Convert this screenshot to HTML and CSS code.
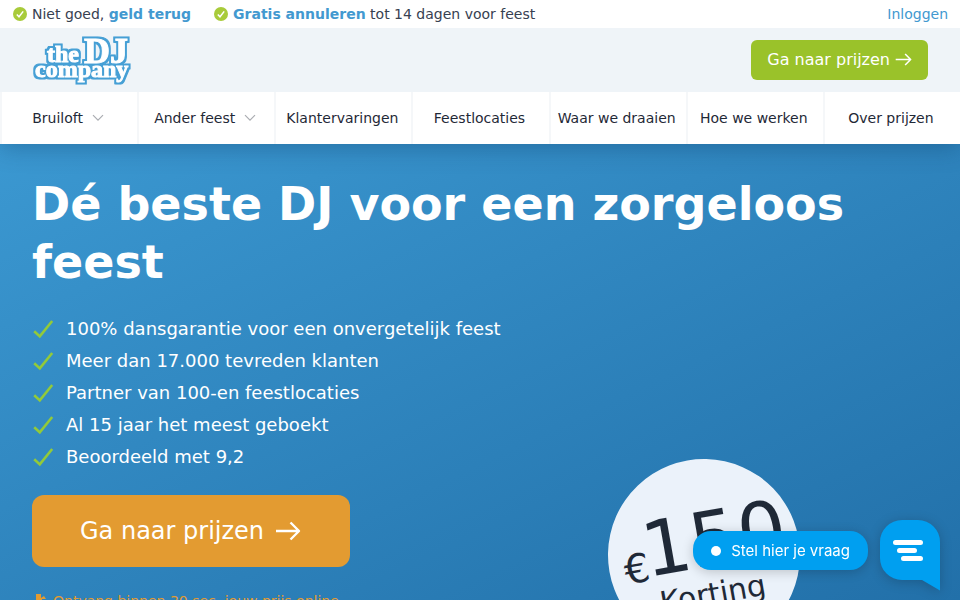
FILE: index.html
```
<!DOCTYPE html>
<html lang="nl">
<head>
	<meta charset="UTF-8">
	<meta name="viewport" content="width=device-width, initial-scale=1">
	<title>The DJ Company</title>
	<link rel="stylesheet" href="styles.css">
</head>
<body>
	<svg class="defs" aria-hidden="true">
		<symbol id="badge" viewBox="0 0 14 14">
			<circle cx="7" cy="7" r="7" fill="#a8cb3a"/>
			<path d="M3.8 7.4l2.2 2.4 4.2-5.4" fill="none" stroke="#fff" stroke-width="1.5"/>
		</symbol>
		<symbol id="check" viewBox="0 0 22 20">
			<path d="M2.2 12.2l5.6 5.2L20.2 2" fill="none" stroke="#92ca3a" stroke-width="2.6"/>
		</symbol>
		<symbol id="chevron" viewBox="0 0 12 8">
			<path d="M1 1.2l5 5 5-5" fill="none" stroke="#aaadb2" stroke-width="1.2"/>
		</symbol>
		<symbol id="arrow" viewBox="0 0 26 20">
			<path d="M1 10h23M15.5 1.5L24 10l-8.5 8.5" fill="none" stroke="#fff" stroke-width="2.4" stroke-linejoin="round"/>
		</symbol>
		<filter id="outline" x="-10%" y="-10%" width="120%" height="120%" color-interpolation-filters="sRGB">
			<feMorphology in="SourceAlpha" operator="dilate" radius="2" result="fat"/>
			<feFlood flood-color="#459fd5"/>
			<feComposite in2="fat" operator="in" result="edge"/>
			<feMerge>
				<feMergeNode in="edge"/>
				<feMergeNode in="SourceGraphic"/>
			</feMerge>
		</filter>
	</svg>

	<div class="topbar">
		<p><svg class="badge"><use href="#badge"/></svg>Niet goed, <b>geld terug</b></p>
		<p><svg class="badge"><use href="#badge"/></svg><b>Gratis annuleren</b> tot 14 dagen voor feest</p>
		<a class="login" href="#">Inloggen</a>
	</div>

	<header class="header">
		<a class="logo" href="#" aria-label="the DJ company">
			<svg width="100" height="48" viewBox="0 0 100 48">
				<g filter="url(#outline)">
					<text x="15" y="26">the</text>
					<text x="52" y="27" class="dj">DJ</text>
					<text x="3" y="41">company</text>
				</g>
			</svg>
		</a>
		<button class="btn btn-green" type="button">Ga naar prijzen <svg><use href="#arrow"/></svg></button>
	</header>

	<nav class="nav">
		<a href="#">Bruiloft <svg><use href="#chevron"/></svg></a>
		<a href="#">Ander feest <svg><use href="#chevron"/></svg></a>
		<a href="#">Klantervaringen</a>
		<a href="#">Feestlocaties</a>
		<a href="#">Waar we draaien</a>
		<a href="#">Hoe we werken</a>
		<a href="#">Over prijzen</a>
	</nav>

	<main class="hero">
		<h1>Dé beste DJ voor een zorgeloos feest</h1>
		<ul>
			<li><svg><use href="#check"/></svg>100% dansgarantie voor een onvergetelijk feest</li>
			<li><svg><use href="#check"/></svg>Meer dan 17.000 tevreden klanten</li>
			<li><svg><use href="#check"/></svg>Partner van 100-en feestlocaties</li>
			<li><svg><use href="#check"/></svg>Al 15 jaar het meest geboekt</li>
			<li><svg><use href="#check"/></svg>Beoordeeld met 9,2</li>
		</ul>
		<button class="btn btn-orange" type="button">Ga naar prijzen <svg><use href="#arrow"/></svg></button>
		<p class="note">
			<svg viewBox="0 0 12 14"><path d="M1 0h5v4l3-2 2 3H7v9H1z" fill="#e39b31"/></svg>
			Ontvang binnen 30 sec. jouw prijs online
		</p>
		<div class="discount">
			<p class="amount"><span>€</span>150</p>
			<p class="label">Korting</p>
		</div>
	</main>

	<div class="chat">
		<button class="chat-text" type="button"><i></i>Stel hier je vraag</button>
		<button class="chat-icon" type="button" aria-label="Chat">
			<svg width="60" height="71" viewBox="0 0 60 71">
				<path d="M22 0h16a22 22 0 0 1 22 22v48.5L42 60H22A22 22 0 0 1 0 38V22A22 22 0 0 1 22 0z" fill="#009ff0"/>
				<path d="M15.5 22.5h25M19.5 30.5h15M23.5 38.5h17" stroke="#fff" stroke-width="5" stroke-linecap="round"/>
			</svg>
		</button>
	</div>
</body>
</html>
```
FILE: styles.css
```
*{
	margin: 0;
	padding: 0;
	box-sizing: border-box;
}
body{
	font-family: "DejaVu Sans", sans-serif;
	font-size: 14px;
	line-height: 20px;
	color: #1f2937;
	background-color: #fff;
}
a{
	color: inherit;
	text-decoration: none;
}
button{
	border: 0;
	font-family: inherit;
	cursor: pointer;
}
.defs{
	position: absolute;
	width: 0;
	height: 0;
}

.topbar{
	display: flex;
	gap: 22px;
	height: 28px;
	padding: 4px 12px;
	color: #374151;
}
.topbar p{
	display: flex;
	align-items: center;
	white-space: pre;
}
.topbar b,
.topbar .login{
	color: #4299d0;
}
.topbar .badge{
	width: 14px;
	height: 14px;
	margin: 0 5px 0 1px;
}
.topbar .login{
	margin-left: auto;
}

.header{
	position: relative;
	z-index: 2;
	display: flex;
	align-items: center;
	justify-content: space-between;
	height: 64px;
	padding: 0 32px;
	background-color: #eff4f8;
}
.logo svg{
	display: block;
	overflow: visible;
}
.logo text{
	font-family: "Liberation Serif", serif;
	font-weight: bold;
	font-size: 24px;
	fill: #fff;
	stroke: #fff;
	stroke-width: 1px;
}
.logo .dj{
	font-size: 36px;
}

.btn{
	display: flex;
	align-items: center;
	color: #fff;
}
.btn-green{
	height: 40px;
	padding: 0 16px 2px;
	gap: 5px;
	border-radius: 6px;
	font-size: 16px;
	background-color: #9ac22a;
}
.btn-green svg{
	width: 17px;
	height: 13px;
}
.btn-orange{
	height: 72px;
	padding: 0 48px;
	gap: 10px;
	border-radius: 12px;
	font-size: 24px;
	background-color: #e39b31;
}
.btn-orange svg{
	width: 28px;
	height: 20px;
}

.nav{
	position: relative;
	z-index: 1;
	display: grid;
	grid-template-columns: repeat(7, 1fr);
	height: 52px;
	background-color: #fff;
	box-shadow: 0 4px 24px rgba(0, 40, 80, .3);
}
.nav a{
	display: flex;
	align-items: center;
	justify-content: center;
	gap: 9px;
	padding-right: 3px;
	border-left: 2px solid #f5f7f9;
	white-space: nowrap;
}
.nav svg{
	width: 12px;
	height: 8px;
}

.hero{
	position: relative;
	height: calc(100vh - 144px);
	min-height: 456px;
	padding: 31px 32px;
	overflow: hidden;
	color: #fff;
	background: linear-gradient(to bottom right, #3b98d1, #2270a9);
}
.hero h1{
	margin-bottom: 22px;
	font-size: 46px;
	line-height: 58px;
}
.hero ul{
	margin-bottom: 22px;
	list-style: none;
	font-size: 18px;
	line-height: 32px;
}
.hero li{
	display: flex;
	align-items: center;
	gap: 12px;
}
.hero li svg{
	width: 22px;
	height: 20px;
}
.note{
	display: flex;
	align-items: center;
	gap: 6px;
	margin-top: 24px;
	padding-left: 3px;
	color: #e39b31;
}
.note svg{
	width: 12px;
	height: 14px;
}

/* discount sticker, lies over the hero */
.discount{
	position: absolute;
	top: 315px;
	right: 160px;
	width: 192px;
	height: 192px;
	padding: 44px 0 0 4px;
	border-radius: 50%;
	text-align: center;
	color: #1f2937;
	background-color: #ebf2fa;
	transform: rotate(-10deg);
}
.discount .amount{
	font-size: 76px;
	line-height: 76px;
	white-space: nowrap;
}
.discount .amount span{
	margin-right: -4px;
	font-size: 40px;
	vertical-align: -4px;
}
.discount .label{
	margin-top: -12px;
	font-size: 30px;
	line-height: 24px;
}

.chat{
	position: fixed;
	right: 20px;
	bottom: 9px;
	display: flex;
	align-items: center;
	gap: 12px;
}
.chat button{
	color: #fff;
}
.chat-text{
	display: flex;
	align-items: center;
	gap: 10px;
	height: 39px;
	margin-bottom: 10px;
	padding: 0 18px;
	border-radius: 18px;
	font-size: 15px;
	background-color: #009ff0;
	box-shadow: 0 2px 12px rgba(0, 0, 0, .2);
}
.chat .chat-text{
	font-family: Inter, sans-serif;
}
.chat-text i{
	width: 10px;
	height: 10px;
	border-radius: 50%;
	background-color: #fff;
}
.chat-icon{
	background: none;
	filter: drop-shadow(0 2px 6px rgba(0, 0, 0, .2));
}
.chat-icon svg{
	display: block;
}
```
